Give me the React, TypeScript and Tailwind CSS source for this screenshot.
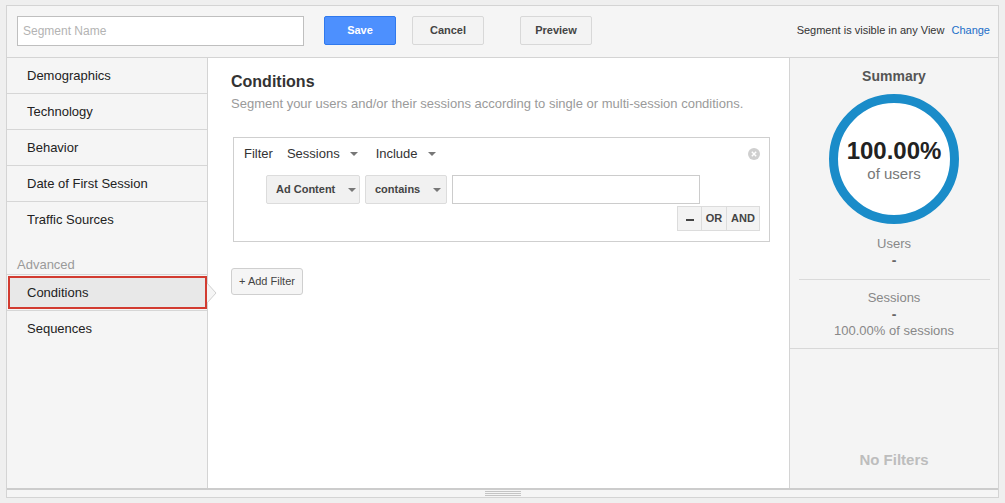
import React from "react";

const Caret = () => (
  <svg width="8" height="4" viewBox="0 0 8 4" className="inline-block">
    <path d="M0 0 L8 0 L4 4 Z" fill="#777" />
  </svg>
);

const navItems = ["Demographics", "Technology", "Behavior", "Date of First Session", "Traffic Sources"];

export default function App() {
  return (
    <div
      className="w-[1005px] h-[503px] bg-[#efefef] pt-[5px] pl-[6px] overflow-hidden"
      style={{ fontFamily: '"Liberation Sans", Arial, sans-serif' }}
    >
      <div className="w-[993px] h-[493px] border border-[#d4d4d4] bg-[#f5f5f5] flex flex-col">
        {/* Top bar */}
        <div className="h-[52px] shrink-0 border-b border-[#d4d4d4] flex items-center pl-[10px] pr-[8px] pb-[2px]">
          <div className="w-[287px] h-[30px] bg-white border border-[#bfbfbf] flex items-center pl-[5px] text-[12px] text-[#b3b3b3]">
            Segment Name
          </div>
          <button className="ml-[20px] w-[72px] h-[29px] -mt-[1px] rounded-[2px] bg-[#4d90fe] border border-[#3079ed] text-white text-[11px] font-bold">
            Save
          </button>
          <button className="ml-[16px] w-[72px] h-[29px] -mt-[1px] rounded-[2px] bg-[#f3f3f3] border border-[#d8d8d8] text-[#444] text-[11px] font-bold">
            Cancel
          </button>
          <button className="ml-[36px] w-[72px] h-[29px] -mt-[1px] rounded-[2px] bg-[#f3f3f3] border border-[#d8d8d8] text-[#444] text-[11px] font-bold">
            Preview
          </button>
          <div className="ml-auto text-[11px] text-[#333] -mt-[1px]">
            Segment is visible in any View <span className="ml-[4px] text-[#1a6ec8]">Change</span>
          </div>
        </div>

        {/* Middle */}
        <div className="flex flex-1 min-h-0">
          {/* Sidebar */}
          <div className="w-[201px] shrink-0 border-r border-[#d4d4d4] bg-[#f5f5f5] flex flex-col">
            {navItems.map((t, i) => (
              <div
                key={t}
                className={`h-[36px] flex items-center pl-[20px] text-[13px] text-[#222] ${i < 4 ? "border-b border-[#d6d6d6]" : ""}`}
              >
                {t}
              </div>
            ))}
            <div className="h-[37px] flex items-end pl-[10px] pb-[0px] text-[13px] text-[#9a9a9a] border-b border-[#d6d6d6]">
              Advanced
            </div>
            <div className="relative h-[36px] border-b border-[#d6d6d6] p-[1px] pr-0">
              <div className="h-full bg-[#e8e8e8] border-2 border-[#d23b30] flex items-center pl-[17px] text-[13px] text-[#222]">
                Conditions
              </div>
              <svg className="absolute left-[200px] top-[8px]" width="10" height="20" viewBox="0 0 10 20">
                <path d="M0 0 L9 10 L0 20" fill="#f5f5f5" stroke="#d0d0d0" strokeWidth="1" />
              </svg>
            </div>
            <div className="h-[36px] flex items-center pl-[20px] text-[13px] text-[#222]">Sequences</div>
          </div>

          {/* Main */}
          <div className="flex-1 bg-white pl-[23px] pt-[14px]">
            <div className="text-[16px] font-bold text-[#333] leading-[20px]">Conditions</div>
            <div className="mt-[4px] text-[13px] text-[#9a9a9a] leading-[16px]">
              Segment your users and/or their sessions according to single or multi-session conditions.
            </div>
            <div className="relative mt-[25px] ml-[2px] w-[537px] h-[105px] border border-[#cfcfcf] pl-[10px] pt-[7px]">
              <div className="flex items-center h-[18px] text-[13px] text-[#333]">
                <span>Filter</span>
                <span className="ml-[14px]">Sessions</span>
                <span className="ml-[10px] mb-[2px]"><Caret /></span>
                <span className="ml-[18px]">Include</span>
                <span className="ml-[10px] mb-[2px]"><Caret /></span>
              </div>
              <svg className="absolute right-[9px] top-[10px]" width="12" height="12" viewBox="0 0 12 12">
                <circle cx="6" cy="6" r="6" fill="#cfcfcf" />
                <path d="M3.8 3.8 L8.2 8.2 M8.2 3.8 L3.8 8.2" stroke="#fff" strokeWidth="1.4" />
              </svg>
              <div className="flex items-center mt-[12px] ml-[22px]">
                <div className="w-[94px] h-[29px] bg-[#f1f1f1] border border-[#dcdcdc] rounded-[2px] flex items-center pl-[9px] text-[11px] font-bold text-[#444]">
                  Ad Content
                  <span className="ml-[13px] mb-[1px]"><Caret /></span>
                </div>
                <div className="ml-[5px] w-[82px] h-[29px] bg-[#f1f1f1] border border-[#dcdcdc] rounded-[2px] flex items-center pl-[9px] text-[11px] font-bold text-[#444]">
                  contains
                  <span className="ml-[13px] mb-[1px]"><Caret /></span>
                </div>
                <div className="ml-[5px] w-[248px] h-[29px] bg-white border border-[#cccccc]" />
              </div>
              <div className="absolute right-[9px] top-[68px] flex h-[25px] border border-[#dcdcdc] bg-[#f3f3f3] text-[11px] font-bold text-[#444]">
                <div className="w-[24px] flex items-center justify-center border-r border-[#dcdcdc]">
                  <div className="w-[8px] h-[2px] bg-[#444] mt-[2px]" />
                </div>
                <div className="w-[25px] flex items-center justify-center border-r border-[#dcdcdc]">OR</div>
                <div className="w-[32px] flex items-center justify-center">AND</div>
              </div>
            </div>
            <button className="mt-[26px] w-[72px] h-[27px] bg-[#f5f5f5] border border-[#cfcfcf] rounded-[3px] text-[11px] text-[#444]">
              + Add Filter
            </button>
          </div>

          {/* Summary */}
          <div className="w-[209px] shrink-0 border-l border-[#d4d4d4] bg-[#f4f4f4] flex flex-col">
            <div className="h-[291px] border-b border-[#d8d8d8] flex flex-col items-center">
              <div className="mt-[10px] text-[14px] font-bold text-[#555] leading-[16px]">Summary</div>
              <div className="mt-[10px] w-[130px] h-[130px] rounded-full border-[9px] border-[#1a8cc9] bg-white flex flex-col items-center justify-center">
                <div className="text-[24px] font-bold text-[#222] leading-[26px] mt-[2px]">100.00%</div>
                <div className="text-[15px] text-[#777] leading-[18px] mt-[1px]">of users</div>
              </div>
              <div className="mt-[12px] text-[13px] text-[#888] leading-[16px]">Users</div>
              <div className="text-[14px] font-bold text-[#666] leading-[16px]">-</div>
              <div className="mt-[11px] w-[191px] border-t border-[#dadada]" />
              <div className="mt-[10px] text-[13px] text-[#888] leading-[16px]">Sessions</div>
              <div className="text-[14px] font-bold text-[#666] leading-[16px]">-</div>
              <div className="mt-[1px] text-[13px] text-[#888] leading-[16px]">100.00% of sessions</div>
            </div>
            <div className="flex-1 flex items-end justify-center pb-[17px] text-[15px] font-bold text-[#bdbdbd]">
              No Filters
            </div>
          </div>
        </div>

        {/* Bottom grip */}
        <div className="h-[9px] shrink-0 border-t-2 border-[#cccccc] bg-[#f5f5f5] flex items-center justify-center">
          <svg width="36" height="6" viewBox="0 0 36 6">
            <path d="M0 0.5 H36 M0 2.5 H36 M0 4.5 H36" stroke="#c4c4c4" strokeWidth="1" />
          </svg>
        </div>
      </div>
    </div>
  );
}
